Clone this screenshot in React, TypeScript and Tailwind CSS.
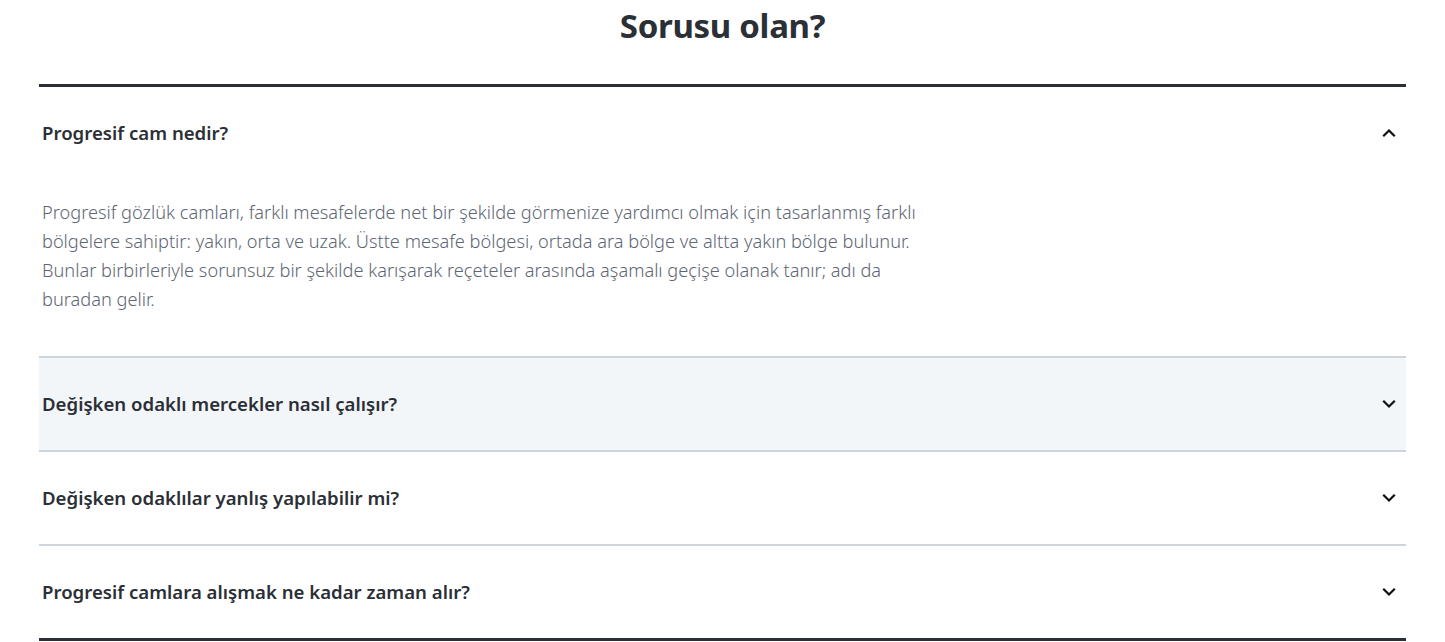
import { useState } from 'react';

interface FaqItem {
  question: string;
  answer: string;
}

const faqItems: FaqItem[] = [
  {
    question: 'Progresif cam nedir?',
    answer:
      'Progresif gözlük camları, farklı mesafelerde net bir şekilde görmenize yardımcı olmak için tasarlanmış farklı bölgelere sahiptir: yakın, orta ve uzak. Üstte mesafe bölgesi, ortada ara bölge ve altta yakın bölge bulunur. Bunlar birbirleriyle sorunsuz bir şekilde karışarak reçeteler arasında aşamalı geçişe olanak tanır; adı da buradan gelir.',
  },
  {
    question: 'Değişken odaklı mercekler nasıl çalışır?',
    answer: '',
  },
  {
    question: 'Değişken odaklılar yanlış yapılabilir mi?',
    answer: '',
  },
  {
    question: 'Progresif camlara alışmak ne kadar zaman alır?',
    answer: '',
  },
];

const Chevron = ({ up }: { up: boolean }) => (
  <svg
    width="16"
    height="16"
    viewBox="0 0 16 16"
    fill="none"
    className={up ? 'rotate-180' : ''}
  >
    <path
      d="M3 5.5 8 10.5 13 5.5"
      stroke="#111"
      strokeWidth="2.2"
      strokeLinecap="square"
    />
  </svg>
);

const App = () => {
  const [openIndex, setOpenIndex] = useState<number | null>(0);
  const hoverIndex = 1;

  return (
    <main
      className="w-full min-h-screen bg-white px-[39px] text-[#2b2f36]"
      style={{ fontFamily: '"Noto Sans", "Open Sans", sans-serif' }}
    >
      <h1 className="text-center text-[33px] leading-[52px] font-bold tracking-[-0.3px] text-[#2b2f36]">
        Sorusu olan?
      </h1>

      <section className="mt-[32px] border-t-[3px] border-b-[3px] border-[#2b2f36]">
        {faqItems.map((item, index) => {
          const isOpen = openIndex === index;
          return (
            <div
              key={item.question}
              className={
                index > 0 ? 'border-t-[2px] border-[#cfd5dc]' : ''
              }
            >
              <button
                type="button"
                onClick={() => setOpenIndex(isOpen ? null : index)}
                className={`w-full h-[92px] flex items-center justify-between pl-[3px] pr-[9px] text-left ${
                  index === hoverIndex ? 'bg-[#f3f6f9]' : ''
                }`}
              >
                <span className="text-[18.6px] font-semibold text-[#2b2f36]">
                  {item.question}
                </span>
                <Chevron up={isOpen} />
              </button>
              {isOpen && item.answer && (
                <p className="max-w-[900px] pl-[3px] pt-[19px] pb-[42px] text-[18.2px] leading-[29px] font-light text-[#5e6673]">
                  {item.answer}
                </p>
              )}
            </div>
          );
        })}
      </section>
    </main>
  );
};

export default App;
